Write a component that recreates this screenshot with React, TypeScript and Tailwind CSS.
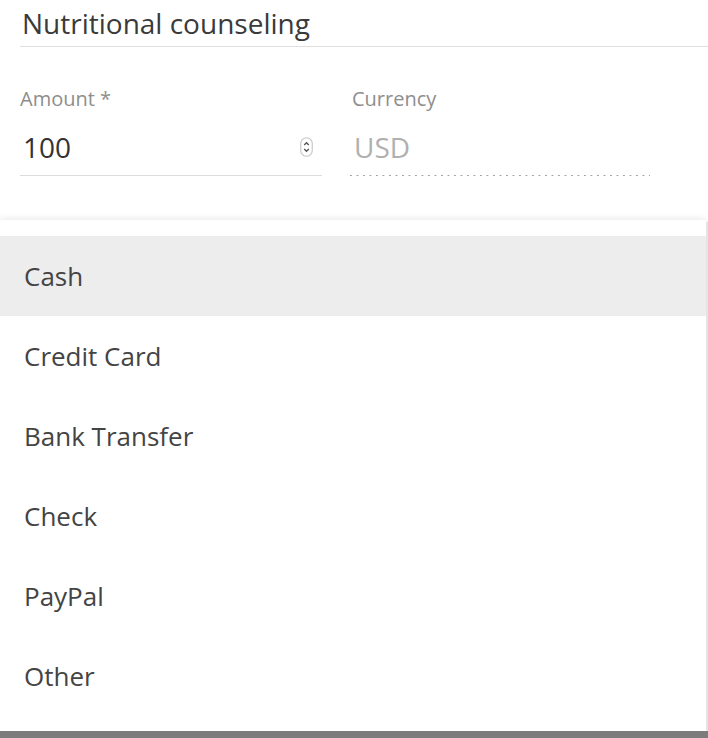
import React from 'react';

const methods = ['Cash', 'Credit Card', 'Bank Transfer', 'Check', 'PayPal', 'Other'];

const Spinner: React.FC = () => (
  <svg width="13" height="20" viewBox="0 0 13 20" className="shrink-0">
    <rect x="0.75" y="0.75" width="11.5" height="18.5" rx="5.75" fill="none" stroke="#c8c8c8" strokeWidth="1.2" />
    <path d="M4.2 8 L6.5 5.7 L8.8 8" fill="none" stroke="#555" strokeWidth="1.3" />
    <path d="M4.2 12 L6.5 14.3 L8.8 12" fill="none" stroke="#555" strokeWidth="1.3" />
  </svg>
);

export default function App() {
  const selected = 'Cash';

  return (
    <div
      className="relative w-[708px] h-[738px] overflow-hidden bg-white text-[#333]"
      style={{ fontFamily: '"Open Sans", "Noto Sans", sans-serif' }}
    >
      {/* Description field */}
      <div className="ml-5">
        <div className="h-[46px] flex items-center pl-[2px] text-[28px] text-[#3a3a3a]">Nutritional counseling</div>
        <div className="h-px bg-[#e0e0e0]" />
      </div>

      {/* Amount + currency */}
      <div className="flex gap-7 ml-5 mt-[38px]">
        <div className="w-[302px]">
          <div className="text-[20px] leading-[28px] text-[#8e8e8e]">Amount *</div>
          <div className="flex items-center justify-between h-[62px] pt-[6px] pl-[3px] pr-[9px]">
            <span className="text-[28px] text-[#333]">100</span>
            <Spinner />
          </div>
          <div className="h-px bg-[#dcdcdc]" />
        </div>
        <div className="w-[300px]">
          <div className="text-[20px] leading-[28px] text-[#8e8e8e] pl-[2px]">Currency</div>
          <div className="flex items-center h-[62px] pt-[6px] pl-[4px]">
            <span className="text-[28px] text-[#b0b0b0]">USD</span>
          </div>
          <div className="h-px bg-[linear-gradient(to_right,#a0a0a0_1.5px,transparent_1.5px)] bg-[length:6.5px_1px]" />
        </div>
      </div>

      {/* Payment method dropdown */}
      <div className="absolute left-0 top-[220px] w-[706px] h-[511px] bg-white py-4 shadow-[0_0_8px_rgba(0,0,0,0.12)]">
        {methods.map((m) => (
          <div
            key={m}
            className={`h-20 flex items-center px-6 text-[26px] text-[#444] ${m === selected ? 'bg-[#ededed]' : ''}`}
          >
            {m}
          </div>
        ))}
      </div>

      {/* Backdrop edges */}
      <div className="absolute right-0 top-[222px] w-[2px] h-[509px] bg-[#e4e4e4]" />
      <div className="absolute left-0 bottom-0 w-full h-[7px] bg-[#7c7c7c]" />
    </div>
  );
}
